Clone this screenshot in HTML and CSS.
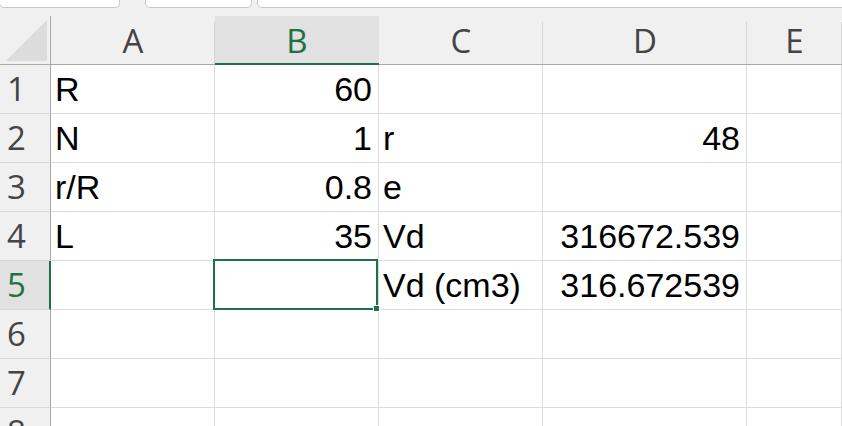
FILE: index.html
```html
<!DOCTYPE html>
<html lang="en">
<head>
<meta charset="utf-8">
<title>Sheet</title>
<link rel="stylesheet" href="styles.css">
</head>
<body>
<div class="tabs">
  <div class="tab t1"></div>
  <div class="tab t2"></div>
  <div class="tab t3"></div>
</div>
<div class="sheet">
  <div class="corner"><div class="tri"></div></div>
  <div class="ch">A</div>
  <div class="ch active">B</div>
  <div class="ch">C</div>
  <div class="ch">D</div>
  <div class="ch">E</div>

  <div class="rh">1</div>
  <div class="c">R</div><div class="c n">60</div><div class="c"></div><div class="c"></div><div class="c"></div>

  <div class="rh">2</div>
  <div class="c">N</div><div class="c n">1</div><div class="c">r</div><div class="c n">48</div><div class="c"></div>

  <div class="rh">3</div>
  <div class="c">r/R</div><div class="c n">0.8</div><div class="c">e</div><div class="c"></div><div class="c"></div>

  <div class="rh">4</div>
  <div class="c">L</div><div class="c n">35</div><div class="c">Vd</div><div class="c n">316672.539</div><div class="c"></div>

  <div class="rh active">5</div>
  <div class="c"></div><div class="c sel"><div class="selbox"><div class="handle"></div></div></div><div class="c">Vd (cm3)</div><div class="c n">316.672539</div><div class="c"></div>

  <div class="rh">6</div>
  <div class="c"></div><div class="c"></div><div class="c"></div><div class="c"></div><div class="c"></div>

  <div class="rh">7</div>
  <div class="c"></div><div class="c"></div><div class="c"></div><div class="c"></div><div class="c"></div>

  <div class="rh">8</div>
  <div class="c"></div><div class="c"></div><div class="c"></div><div class="c"></div><div class="c"></div>
</div>
</body>
</html>
```

FILE: styles.css
```css
* { box-sizing: border-box; }

html, body {
  margin: 0;
  padding: 0;
  height: 426px;
  overflow: hidden;
  background: #ffffff;
}

.tabs {
  display: flex;
  height: 8px;
  background: #f0f0f0;
}

.tab {
  height: 8px;
  background: #ffffff;
  border: 1px solid #c8c8c8;
  border-top: none;
  border-radius: 0 0 5px 5px;
}

.t1 { width: 121px; margin-left: -1px; }
.t2 { width: 107px; margin-left: 25px; }
.t3 { flex: 1; margin-left: 5px; margin-right: -8px; }

.sheet {
  display: grid;
  grid-template-columns: 51px 164px 164px 164px 204px 1fr;
  grid-template-rows: 57px;
  grid-auto-rows: 49px;
}

.corner {
  background: #f0f0f0;
  border-bottom: 1px solid #a9a9a9;
  background-image: linear-gradient(#a9a9a9, #a9a9a9);
  background-position: right bottom;
  background-size: 1px 48px;
  background-repeat: no-repeat;
  padding: 12px 0 0 6px;
}

.tri {
  width: 41px;
  height: 41px;
  background: #dcdcdc;
  clip-path: polygon(100% 0, 100% 100%, 0 100%);
}

.ch {
  background-color: #f0f0f0;
  background-image: linear-gradient(#d6d6d6, #d6d6d6);
  background-position: right bottom;
  background-size: 1px 42px;
  background-repeat: no-repeat;
  border-bottom: 1px solid #a9a9a9;
  font-family: "Open Sans", "Noto Sans", sans-serif;
  font-size: 33px;
  line-height: 45px;
  color: #444444;
  text-align: center;
  padding-top: 10px;
}

.ch.active {
  background-image: linear-gradient(#e1e1e1, #e1e1e1);
  background-position: 0 8px;
  background-size: 100% 100%;
  border-bottom: 2px solid #1f7145;
  color: #1f7145;
}

.rh {
  background: #f0f0f0;
  border-right: 1px solid #a9a9a9;
  border-bottom: 1px solid #d9d9d9;
  font-family: "Open Sans", "Noto Sans", sans-serif;
  font-size: 33px;
  line-height: 48px;
  color: #444444;
  text-align: center;
  padding-right: 17px;
}

.rh.active {
  background: #e1e1e1;
  border-right: 2px solid #1f7145;
  color: #1f7145;
  padding-right: 16px;
}

.c {
  border-right: 1px solid #dcdcdc;
  border-bottom: 1px solid #dcdcdc;
  font-family: "Liberation Sans", Arial, sans-serif;
  font-size: 34px;
  line-height: 48px;
  color: #000000;
  padding: 0 6px 0 4px;
  white-space: nowrap;
}

.c.n { text-align: right; }

.c.sel { position: relative; }

.selbox {
  position: absolute;
  top: -2px;
  left: -2px;
  right: 0;
  bottom: -1px;
  border: 2px solid #1f7145;
}

.handle {
  position: absolute;
  right: -4px;
  bottom: -4px;
  width: 7px;
  height: 7px;
  background: #1f7145;
  border: 1px solid #ffffff;
}
```
